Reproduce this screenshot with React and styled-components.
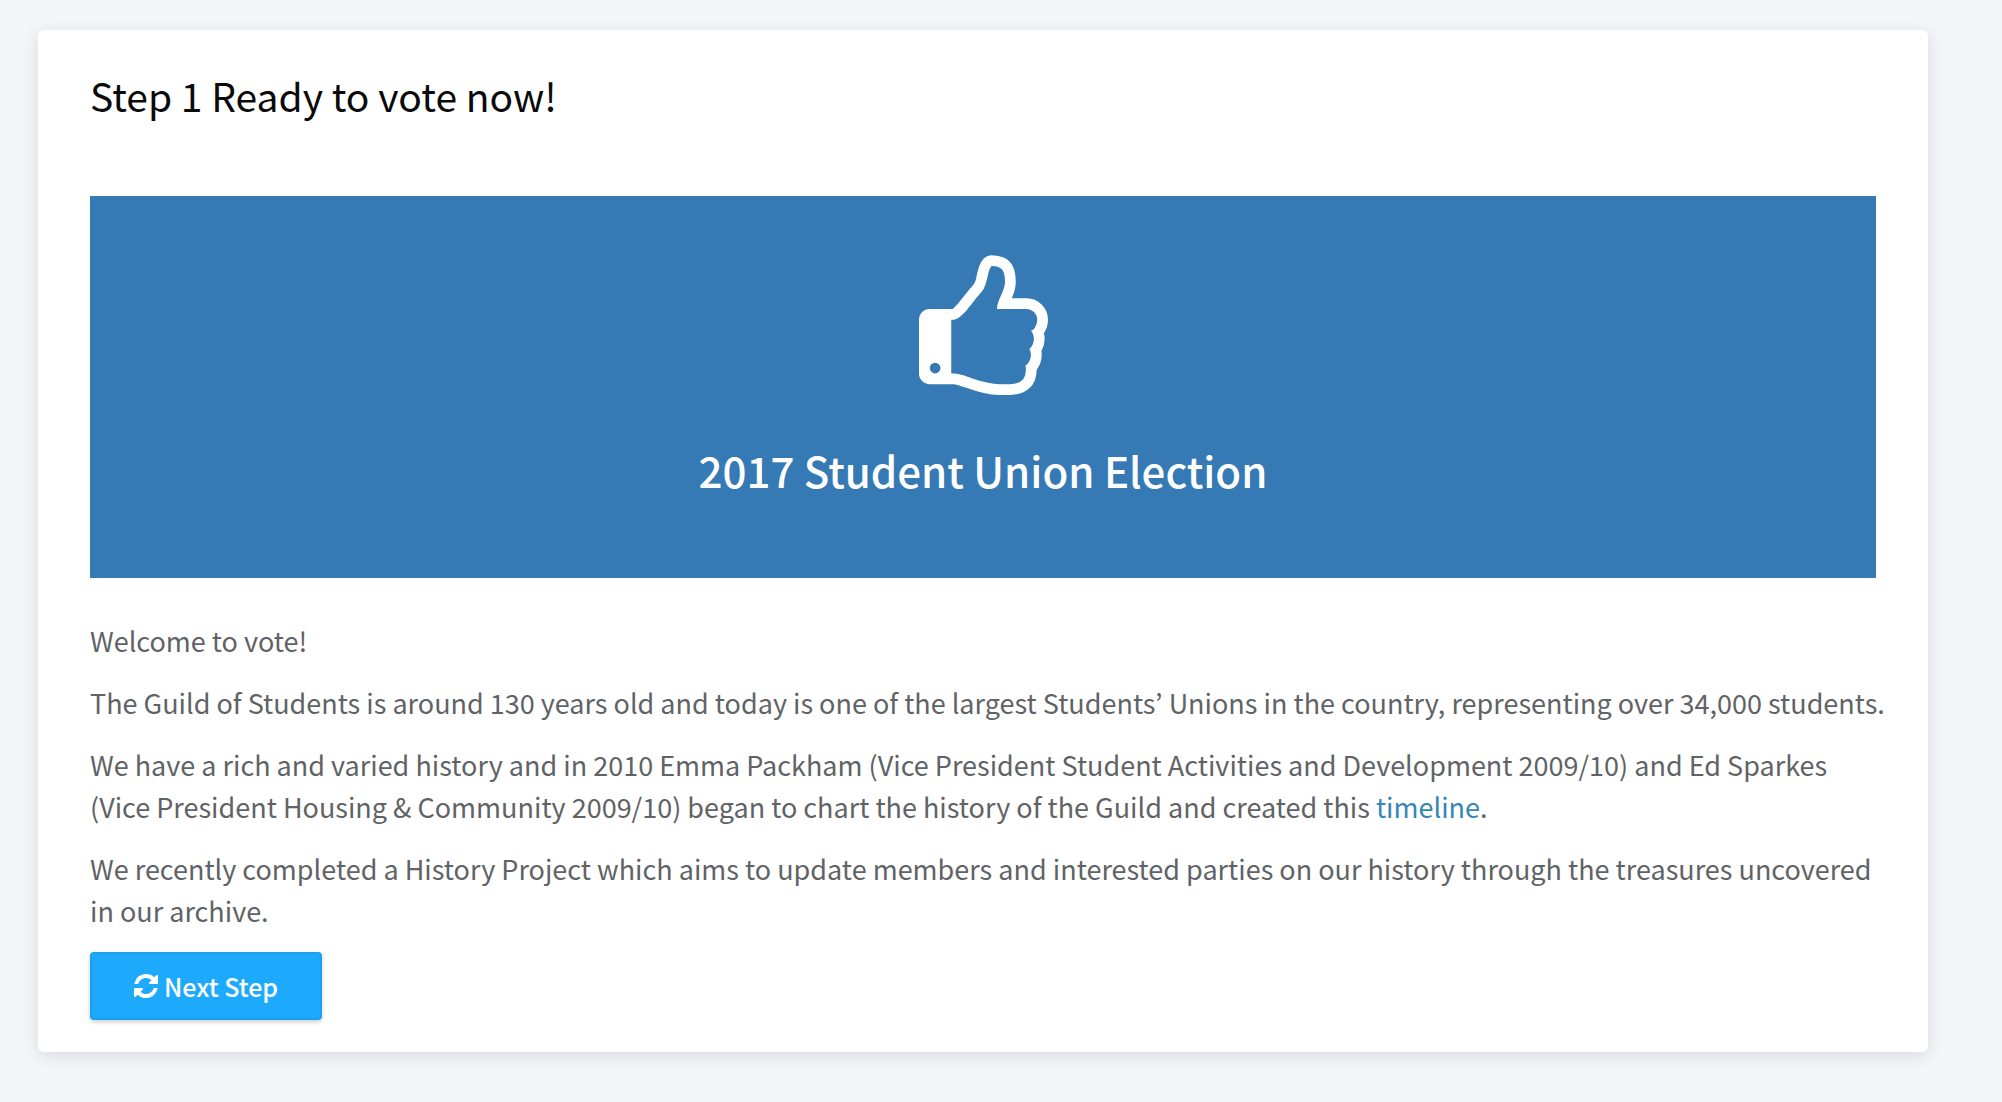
import React from "react";
import styled, { createGlobalStyle } from "styled-components";

const GlobalStyle = createGlobalStyle`
  *, *::before, *::after { box-sizing: border-box; }
  body {
    margin: 0;
    background: #f3f5f9;
    color: #606366;
    font-family: "Noto Sans CJK KR", "Noto Sans", sans-serif;
    font-size: 27px;
    line-height: 42px;
  }
`;

const Page = styled.main`
  padding: 30px 74px 50px 38px;
`;

const Card = styled.section`
  padding: 38px 52px 32px;
  background: #fff;
  border-radius: 6px;
  box-shadow: 0 4px 16px rgba(40, 40, 60, 0.12);
`;

const StepTitle = styled.h1`
  margin: 0 0 74px;
  color: #0a0a0a;
  font-size: 39px;
  font-weight: 400;
  line-height: 54px;
`;

const Banner = styled.header`
  display: flex;
  flex-direction: column;
  align-items: center;
  gap: 46px;
  padding: 59px 32px 79px;
  background: #367ab5;
  color: #fff;
`;

const BannerTitle = styled.h2`
  margin: 0;
  font-size: 42px;
  font-weight: 500;
  line-height: 58px;
  text-align: center;
`;

const Copy = styled.div`
  display: flex;
  flex-direction: column;
  gap: 20px;
  margin-right: -10px;
  padding: 42px 0 20px;
`;

const Paragraph = styled.p`
  margin: 0;
`;

const TextLink = styled.a`
  color: #3586b7;
  text-decoration: none;
`;

const NextButton = styled.button`
  display: inline-flex;
  align-items: center;
  gap: 6px;
  height: 68px;
  padding: 0 42px;
  border: 2px solid #1c9ff0;
  border-radius: 4px;
  background: #1eaafc;
  box-shadow: 0 2px 4px rgba(0, 0, 0, 0.2);
  color: #fff;
  font: inherit;
  font-size: 25px;
  font-weight: 500;
  cursor: pointer;
`;

const ThumbsUp = () => (
  <svg width="129" height="140" viewBox="0 0 1536 1664" fill="currentColor" aria-hidden="true">
    <path d="M256 1344q0-26-19-45t-45-19q-27 0-45.500 19t-18.500 45q0 27 18.500 45.500t45.500 18.500q26 0 45-18.500t19-45.500zM1408 768q0-51-39-89.500t-89-38.500h-352q0-58 48-159.500t48-160.500q0-98-32-145t-128-47q-26 26-38 85t-30.500 125.500-59.500 109.500q-22 23-77 91-4 5-23 30t-31.500 41-34.500 42.500-40 44-38.500 35.500-40 27-35.500 9h-32v640h32q13 0 31.500 3t33 6.500 38 11 35 11.500 35.500 12.500 29 10.500q211 73 342 73h121q192 0 192-167 0-26-5-56 30-16 47.500-52.500t17.500-73.500-18-69q53-50 53-119 0-25-10-55.500t-25-47.500q32-1 53.500-47t21.500-81zM1536 767q0 89-49 163 9 33 9 69 0 77-38 144 3 21 3 43 0 101-60 178 1 139-85 219.500t-227 80.500h-129q-96 0-189.500-22.500t-216.500-65.500q-116-40-138-40h-288q-53 0-90.500-37.500t-37.500-90.500v-640q0-53 37.500-90.500t90.500-37.500h274q36-24 137-155 58-75 107-128 24-25 35.500-85.500t30.500-126.500 62-108q39-37 90-37 84 0 151 32.500t102 101.500 35 186q0 93-48 192h176q104 0 180 76t76 179z" />
  </svg>
);

const Refresh = () => (
  <svg width="24" height="24" viewBox="128 128 1536 1536" fill="currentColor" aria-hidden="true">
    <path d="M1639 1056q0 5-1 7-64 268-268 434.500t-478 166.500q-146 0-282.500-55t-243.500-157l-129 129q-19 19-45 19t-45-19-19-45v-448q0-26 19-45t45-19h448q26 0 45 19t19 45-19 45l-137 137q71 66 161 102t187 36q134 0 250-65t186-179q11-17 53-117 8-23 30-23h192q13 0 22.500 9.500t9.500 22.500zM1664 256v448q0 26-19 45t-45 19h-448q-26 0-45-19t-19-45 19-45l138-138q-148-137-349-137-134 0-250 65t-186 179q-11 17-53 117-8 23-30 23h-199q-13 0-22.500-9.500t-9.500-22.500v-7q65-268 270-434.500t480-166.500q146 0 284 55.500t245 156.500l130-129q19-19 45-19t45 19 19 45z" />
  </svg>
);

export default function App() {
  return (
    <>
      <GlobalStyle />
      <Page>
        <Card>
          <StepTitle>Step 1 Ready to vote now!</StepTitle>
          <Banner>
            <ThumbsUp />
            <BannerTitle>2017 Student Union Election</BannerTitle>
          </Banner>
          <Copy>
            <Paragraph>Welcome to vote!</Paragraph>
            <Paragraph>
              The Guild of Students is around 130 years old and today is one of the largest Students’ Unions in the country, representing over 34,000 students.
            </Paragraph>
            <Paragraph>
              We have a rich and varied history and in 2010 Emma Packham (Vice President Student Activities and Development 2009/10) and Ed Sparkes (Vice President Housing &amp; Community 2009/10) began to chart the history of the Guild and created this{" "}
              <TextLink href="#timeline">timeline</TextLink>.
            </Paragraph>
            <Paragraph>
              We recently completed a History Project which aims to update members and interested parties on our history through the treasures uncovered in our archive.
            </Paragraph>
          </Copy>
          <NextButton type="button">
            <Refresh />
            <span>Next Step</span>
          </NextButton>
        </Card>
      </Page>
    </>
  );
}
